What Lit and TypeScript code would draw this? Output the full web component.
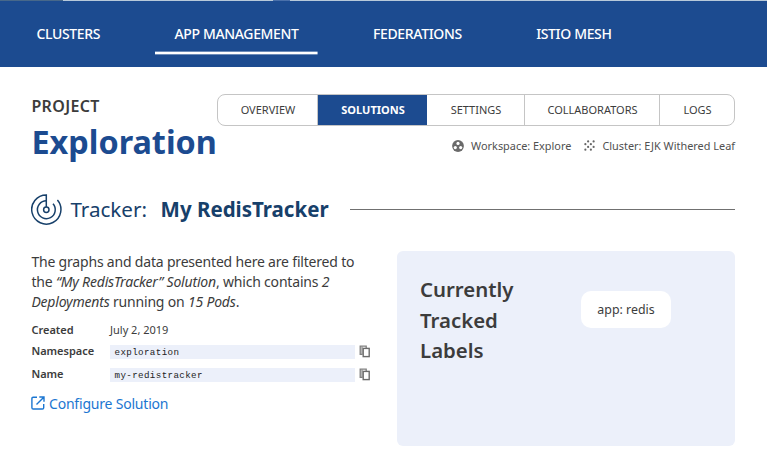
import { LitElement, html, css, svg } from "lit";
import { customElement } from "lit/decorators.js";

const copyIcon = html`<svg class="copy" width="12" height="13" viewBox="0 0 12 13">
  <path d="M1.5 1.5H4V9.5H1.5Z" fill="#b5b5b5" />
  <path d="M3.5 9.4H1.2V1.2H7.2V3" fill="none" stroke="#808080" stroke-width="1.3" />
  <rect x="4.2" y="3.4" width="6" height="8.2" fill="#fff" stroke="#6c6c6c" stroke-width="1.4" />
</svg>`;

const clusterDots = [
  [10, 6], [18, 6], [6, 10], [14, 10], [10, 14], [18, 14], [6, 18], [14, 18],
];

@customElement("app-root")
export class AppRoot extends LitElement {
  static styles = css`
    :host {
      display: block;
      width: 767px;
      height: 462px;
      overflow: hidden;
      background: #fff;
      color: #3c3c3c;
      font-family: "Noto Sans", sans-serif;
      font-size: 14px;
    }
    * { box-sizing: border-box; }
    svg { display: block; flex: none; }
    .strip { height: 1px; display: flex; background: #b7c9da; }
    .strip .dark { width: 63px; background: #47688a; }
    .strip .mid { width: 17px; margin-left: 210px; background: #4a70aa; }
    nav {
      height: 66px;
      background: #1c4b90;
      color: #fff;
      display: flex;
      gap: 36.4px;
      padding-left: 17.4px;
    }
    nav a {
      height: 54px;
      padding: 0 19px;
      line-height: 66px;
      font-size: 14px;
      font-weight: 500;
      letter-spacing: -0.35px;
      white-space: nowrap;
    }
    nav .active {
      background: linear-gradient(#6c8bb8 1px, #fff 1px, #fff 3px, #6c8bb8 3px) bottom / 100% 4px no-repeat;
    }
    main { padding: 27px 32px 0; }
    .head { display: flex; justify-content: space-between; height: 99px; }
    .eyebrow { font-size: 16px; font-weight: 600; line-height: 23px; padding-top: 1px; letter-spacing: 0.35px; }
    h1 { margin: -1px 0 0; font-size: 32.4px; line-height: 48px; font-weight: 700; color: #1c4b90; }
    .names { margin-left: -0.6px; }
    .tabs {
      display: flex;
      width: 518px;
      height: 32px;
      border: 1px solid #c5c5c5;
      border-radius: 8px;
      overflow: hidden;
      font-size: 11px;
      line-height: 30px;
      text-align: center;
    }
    .tabs span { border-right: 1px solid #c5c5c5; padding-left: 1px; }
    .tabs span:last-child { border: 0; }
    .tabs .t1 { width: 100px; }
    .tabs .t2 { width: 109px; padding-left: 2px; background: #1c4b90; color: #fff; font-weight: 700; border-color: #1c4b90; }
    .tabs .t3 { width: 98px; }
    .tabs .t4 { width: 135px; }
    .tabs .t5 { flex: 1; }
    .right { display: flex; flex-direction: column; align-items: flex-end; }
    .meta { display: flex; align-items: center; height: 20px; margin-top: 9px; font-size: 10.9px; white-space: nowrap; color: #505050; }
    .meta svg { position: relative; top: 0.5px; left: 0.5px; }
    .meta .ws { margin: 0 12px 0 8px; }
    .meta .cl { margin-left: 8px; }
    .title { display: flex; align-items: center; height: 32px; color: #17406a; font-size: 20.6px; white-space: nowrap; }
    .title svg { margin-left: -0.6px; }
    .title b { margin-left: 13.6px; font-size: 20.5px; }
    .title .lead { margin-left: 8px; }
    .title .rule { flex: 1; height: 1px; background: #707070; margin-left: 21px; }
    .body { display: flex; justify-content: space-between; margin-top: 26px; }
    .left { width: 345px; padding-top: 1px; margin-left: -0.6px; }
    p { margin: 0; line-height: 20px; letter-spacing: -0.19px; white-space: nowrap; }
    .row { display: flex; align-items: center; height: 23px; font-size: 11px; }
    .rows { margin-top: 7px; }
    .row .k { width: 78.6px; font-weight: 600; position: relative; top: -1px; }
    .row .v {
      width: 245px;
      height: 14px;
      background: #ecf0fa;
      padding-left: 4.5px;
      font: 9.2px/15px "Liberation Mono", monospace;
      letter-spacing: 0.38px;
      color: #222;
    }
    .row .copy { margin-left: 3.6px; }
    .row.first { height: 20px; margin-bottom: 1px; }
    .row.first .k { top: 0; }
    .link { display: flex; align-items: center; height: 20px; margin-top: 7px; color: #1b76d1; letter-spacing: -0.2px; }
    .link span { margin-left: 3.6px; }
    .card {
      width: 338px;
      height: 195px;
      border-radius: 6px;
      background: #ecf0fa;
      display: flex;
      align-items: flex-start;
      padding: 23px 23px 0;
    }
    h2 { margin: 0; width: 161px; font-size: 20.4px; line-height: 30.6px; font-weight: 600; }
    .chip {
      margin-top: 17px;
      width: 90px;
      height: 37px;
      border-radius: 10px;
      background: #fff;
      line-height: 37px;
      text-align: center;
      font-size: 12.4px;
      font-weight: 450;
    }
  `;

  render() {
    return html`
      <div class="strip"><i class="dark"></i><i class="mid"></i></div>
      <nav>
        <a>CLUSTERS</a><a class="active">APP MANAGEMENT</a><a>FEDERATIONS</a><a>ISTIO MESH</a>
      </nav>
      <main>
        <div class="head">
          <div class="names">
            <div class="eyebrow">PROJECT</div>
            <h1>Exploration</h1>
          </div>
          <div class="right">
            <div class="tabs">
              <span class="t1">OVERVIEW</span><span class="t2">SOLUTIONS</span><span class="t3">SETTINGS</span><span class="t4">COLLABORATORS</span><span class="t5">LOGS</span>
            </div>
            <div class="meta">
              <svg width="12" height="12" viewBox="0 0 12 12">
                <circle cx="6" cy="6" r="5.9" fill="#6a6a6a" />
                <circle cx="6" cy="3.4" r="1.6" fill="#fff" />
                <circle cx="3.3" cy="7.6" r="1.6" fill="#fff" />
                <circle cx="8.7" cy="7.6" r="1.6" fill="#fff" />
              </svg>
              <span class="ws">Workspace: Explore</span>
              <svg width="11" height="11" viewBox="4 4 16 16">
                ${clusterDots.map(([x, y]) => svg`<circle cx=${x} cy=${y} r="1.6" fill="#666" />`)}
              </svg>
              <span class="cl">Cluster: EJK Withered Leaf</span>
            </div>
          </div>
        </div>
        <div class="title">
          <svg width="31" height="31" viewBox="0 0 31 31" fill="none" stroke="#17406a" stroke-width="1.5">
            <path d="M15.3 13V.9A14.6 14.6 0 1 0 26.4 6" />
            <path d="M15.3 6.8A8.9 8.9 0 1 0 22 9.8" />
            <circle cx="15.3" cy="15.7" r="2.7" />
          </svg>
          <span class="lead">Tracker:</span><b>My RedisTracker</b><i class="rule"></i>
        </div>
        <div class="body">
          <div class="left">
            <p>The graphs and data presented here are filtered to<br />the <em>“My RedisTracker” Solution</em>, which contains <em>2</em><br /><em>Deployments</em> running on <em>15 Pods</em>.</p>
            <div class="rows">
              <div class="row first"><span class="k">Created</span><span>July 2, 2019</span></div>
              <div class="row"><span class="k">Namespace</span><span class="v">exploration</span>${copyIcon}</div>
              <div class="row"><span class="k">Name</span><span class="v">my-redistracker</span>${copyIcon}</div>
            </div>
            <div class="link">
              <svg width="14" height="14" viewBox="0 0 14 14" fill="none" stroke="currentColor" stroke-width="1.4">
                <path d="M6 1.2H2.2Q.9 1.2 .9 2.5V11.7Q.9 13 2.2 13H11.4Q12.7 13 12.7 11.7V8M8.3 1H13V5.7M12.8 1.2L5.5 8.5" />
              </svg>
              <span>Configure Solution</span>
            </div>
          </div>
          <div class="card">
            <h2>Currently<br />Tracked<br />Labels</h2>
            <div class="chip">app: redis</div>
          </div>
        </div>
      </main>
    `;
  }
}
